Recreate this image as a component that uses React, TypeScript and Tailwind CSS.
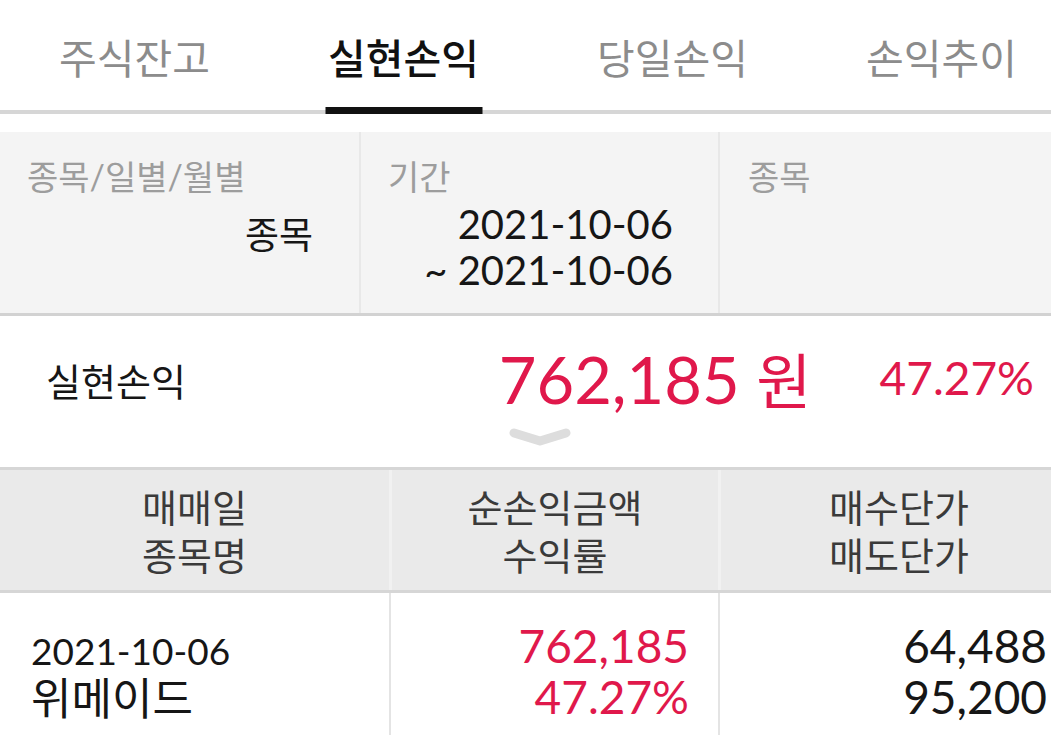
const font = "font-['Lato','Noto_Sans_CJK_KR',sans-serif]";

const tabs = ["주식잔고", "실현손익", "당일손익", "손익추이"];

const Tabs = () => {
  return (
    <div className="flex w-[1077px] border-b-[4px] border-[#d6d6d6]">
      {tabs.map((t, idx) => (
        <div key={idx} className="relative flex h-[110px] w-[269px] items-center justify-center">
          <span
            className={
              idx === 1
                ? "pt-[8px] text-[41px] font-medium text-[#111111]"
                : "pt-[8px] text-[41px] text-[#8c8c8c]"
            }
          >
            {t}
          </span>
          {idx === 1 && (
            <div className="absolute bottom-[-4px] left-1/2 h-[7px] w-[157px] -translate-x-1/2 bg-[#111111]" />
          )}
        </div>
      ))}
    </div>
  );
};

const Filter = () => {
  return (
    <div className="mt-[18px] flex h-[184px] w-[1077px] border-b-[3px] border-[#d2d2d2] bg-[#f4f4f4]">
      <div className="flex w-[359px] flex-col pl-[27px] pr-[46px] pt-[23px]">
        <span className="text-[34px] leading-[44px] text-[#9d9d9d]">종목/일별/월별</span>
        <span className="mt-[14px] text-right text-[37px] leading-[44px] text-[#161616]">종목</span>
      </div>
      <div className="flex w-[359px] flex-col border-l-[2px] border-[#e8e8e8] pl-[27px] pr-[45px] pt-[23px]">
        <span className="text-[34px] leading-[44px] text-[#9d9d9d]">기간</span>
        <div className="mt-[2px] flex flex-col items-end text-[40px] leading-[46px] text-[#161616]">
          <span>2021-10-06</span>
          <span>~ 2021-10-06</span>
        </div>
      </div>
      <div className="flex w-[359px] flex-col border-l-[2px] border-[#e8e8e8] pl-[28px] pt-[23px]">
        <span className="text-[34px] leading-[44px] text-[#9d9d9d]">종목</span>
      </div>
    </div>
  );
};

const Summary = () => {
  return (
    <div className="flex h-[154px] w-[1051px] flex-col border-b-[3px] border-[#d6d6d6]">
      <div className="flex h-[108px] items-end pb-[1px]">
        <span className="mb-[13px] pl-[46px] text-[38px] text-[#161616]">실현손익</span>
        <div className="flex-1" />
        <span className="text-[65px] leading-[84px] text-[#e0184b]">
          762,185 <span className="text-[60px]">원</span>
        </span>
        <span className="mb-[11px] ml-[68px] pr-[17px] text-[46px] text-[#e0184b]">47.27%</span>
      </div>
      <div className="ml-[509px] mt-[4px]">
        <svg width="62" height="20" viewBox="0 0 62 20">
          <path d="M5 5 L31 13 L57 5" fill="none" stroke="#dddddd" strokeWidth="9" strokeLinecap="round" strokeLinejoin="round" />
        </svg>
      </div>
    </div>
  );
};

const Header = () => {
  const cols = [
    { w: "w-[389px]", a: "매매일", b: "종목명" },
    { w: "w-[329px]", a: "순손익금액", b: "수익률" },
    { w: "w-[359px]", a: "매수단가", b: "매도단가" },
  ];
  return (
    <div className="flex h-[123px] w-[1077px] border-b-[3px] border-[#d6d6d6] bg-[#eaeaea]">
      {cols.map((c, idx) => (
        <div
          key={idx}
          className={`${c.w} flex flex-col items-center justify-center pt-[2px] text-[38px] leading-[48px] text-[#3a3a3a] ${idx > 0 ? "border-l-[3px] border-[#f1f1f1]" : ""}`}
        >
          <span>{c.a}</span>
          <span>{c.b}</span>
        </div>
      ))}
    </div>
  );
};

const Row = () => {
  return (
    <div className="flex h-[150px] w-[1077px] bg-white">
      <div className="flex w-[389px] flex-col pl-[31px] pt-[35px]">
        <span className="text-[37px] leading-[46px] text-[#161616]">2021-10-06</span>
        <span className="text-[44px] leading-[48px] text-[#161616]">위메이드</span>
      </div>
      <div className="flex w-[329px] flex-col items-end border-l-[2px] border-[#e4e4e4] pr-[29px] pt-[27px] text-[46px] leading-[51px] text-[#e0184b]">
        <span>762,185</span>
        <span>47.27%</span>
      </div>
      <div className="flex w-[359px] flex-col items-end border-l-[2px] border-[#e4e4e4] pr-[30px] pt-[27px] text-[46px] leading-[51px] text-[#161616]">
        <span>64,488</span>
        <span>95,200</span>
      </div>
    </div>
  );
};

export default function App() {
  return (
    <div className={`h-[735px] w-[1051px] overflow-hidden bg-white ${font}`}>
      <Tabs />
      <Filter />
      <Summary />
      <Header />
      <Row />
    </div>
  );
}
